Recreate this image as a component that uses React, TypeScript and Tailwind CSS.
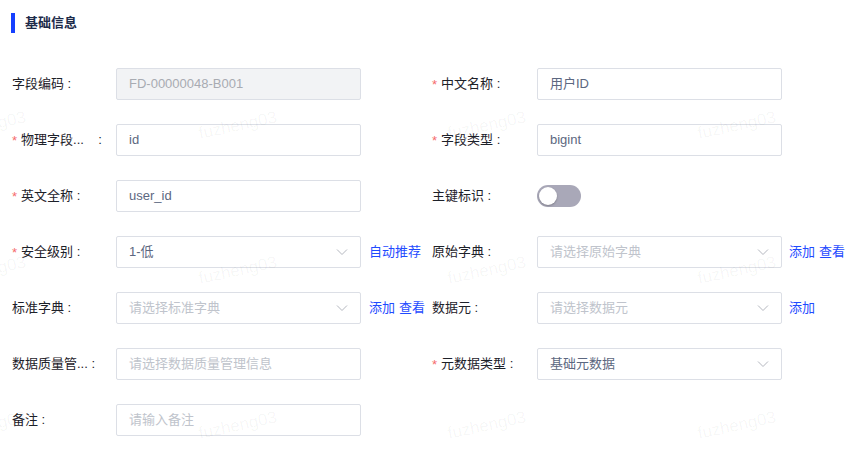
import React from 'react';

const FONT = '"Liberation Sans", "Noto Sans CJK SC", sans-serif';

interface FieldProps {
  label: string;
  required?: boolean;
  children: React.ReactNode;
  extra?: React.ReactNode;
  labelWidth: string;
}

function Chevron() {
  return (
    <svg width="12" height="8" viewBox="0 0 12 8" fill="none" className="shrink-0">
      <path d="M1 1.5 L6 6.5 L11 1.5" stroke="#b4b7bf" strokeWidth="1" />
    </svg>
  );
}

function Field({ label, required, children, extra, labelWidth }: FieldProps) {
  return (
    <div className="flex items-center h-8">
      <div className={`flex items-center shrink-0 text-[13px] text-[#1d2129] ${labelWidth}`}>
        {required && <span className="text-[#f56c6c] mr-[4px] mt-[2px]">*</span>}
        <span className="whitespace-pre">{label}</span>
      </div>
      {children}
      {extra}
    </div>
  );
}

function TextBox({ value, placeholder, disabled }: { value?: string; placeholder?: string; disabled?: boolean }) {
  return (
    <div
      className={`w-[245px] h-8 border border-[#dcdfe6] rounded-[2px] flex items-center px-3 text-[13px] ${
        disabled ? 'bg-[#f2f3f5] text-[#a8abb2]' : 'bg-white'
      } ${value && !disabled ? 'text-[#5c6780]' : ''} ${!value ? 'text-[#c0c4cc]' : ''}`}
    >
      {value || placeholder}
    </div>
  );
}

function SelectBox({ value, placeholder }: { value?: string; placeholder?: string }) {
  return (
    <div className="w-[245px] h-8 border border-[#dcdfe6] rounded-[2px] flex items-center justify-between pl-3 pr-[12px] text-[13px] bg-white">
      <span className={value ? 'text-[#5c6780]' : 'text-[#c0c4cc]'}>{value || placeholder}</span>
      <Chevron />
    </div>
  );
}

function Links({ items, className }: { items: string[]; className: string }) {
  return (
    <div className={`flex gap-[4px] text-[13px] text-[#1f4bff] whitespace-nowrap ${className}`}>
      {items.map((t) => (
        <span key={t}>{t}</span>
      ))}
    </div>
  );
}

function Toggle() {
  return (
    <div className="w-[44px] h-[22px] rounded-full bg-[#a9a8b8] flex items-center px-[2px]">
      <div className="w-[18px] h-[18px] rounded-full bg-white shadow-[0_1px_2px_rgba(0,0,0,0.25)]" />
    </div>
  );
}

const marks: { x: number; y: number }[] = [];
[121, 266, 421].forEach((y) => {
  [-52, 199, 448, 698].forEach((x) => marks.push({ x, y }));
});

export default function App() {
  const L = 'w-[104px]';
  const R = 'w-[105px]';
  return (
    <div className="relative w-[851px] h-[449px] bg-white overflow-hidden" style={{ fontFamily: FONT }}>
      <div className="px-3 pt-[13px]">
        <div className="flex items-center h-5">
          <div className="w-[4px] h-5 bg-[#1640ff] -ml-[1px]" />
          <span className="ml-[10px] text-[13px] font-bold text-[#1d2b4a]">基础信息</span>
        </div>

        <div className="mt-[35px] grid grid-cols-[420px_1fr] gap-y-6">
          <Field label="字段编码 :" labelWidth={L}>
            <TextBox value="FD-00000048-B001" disabled />
          </Field>
          <Field label="中文名称 :" required labelWidth={R}>
            <TextBox value="用户ID" />
          </Field>

          <Field label="物理字段...    :" required labelWidth={L}>
            <TextBox value="id" />
          </Field>
          <Field label="字段类型 :" required labelWidth={R}>
            <TextBox value="bigint" />
          </Field>

          <Field label="英文全称 :" required labelWidth={L}>
            <TextBox value="user_id" />
          </Field>
          <Field label="主键标识 :" labelWidth={R}>
            <Toggle />
          </Field>

          <Field label="安全级别 :" required labelWidth={L} extra={<Links items={['自动推荐']} className="ml-2" />}>
            <SelectBox value="1-低" />
          </Field>
          <Field label="原始字典 :" labelWidth={R} extra={<Links items={['添加', '查看']} className="ml-[7px]" />}>
            <SelectBox placeholder="请选择原始字典" />
          </Field>

          <Field label="标准字典 :" labelWidth={L} extra={<Links items={['添加', '查看']} className="ml-2" />}>
            <SelectBox placeholder="请选择标准字典" />
          </Field>
          <Field label="数据元 :" labelWidth={R} extra={<Links items={['添加']} className="ml-[7px]" />}>
            <SelectBox placeholder="请选择数据元" />
          </Field>

          <Field label="数据质量管... :" labelWidth={L}>
            <TextBox placeholder="请选择数据质量管理信息" />
          </Field>
          <Field label="元数据类型 :" required labelWidth={R}>
            <SelectBox value="基础元数据" />
          </Field>

          <Field label="备注 :" labelWidth={L}>
            <TextBox placeholder="请输入备注" />
          </Field>
        </div>
      </div>

      {marks.map((m, i) => (
        <span
          key={i}
          className="absolute pointer-events-none text-[17px] text-[rgba(0,0,0,0.045)] whitespace-nowrap -rotate-[12deg] origin-left"
          style={{ left: m.x, top: m.y }}
        >
          fuzheng03
        </span>
      ))}
    </div>
  );
}
